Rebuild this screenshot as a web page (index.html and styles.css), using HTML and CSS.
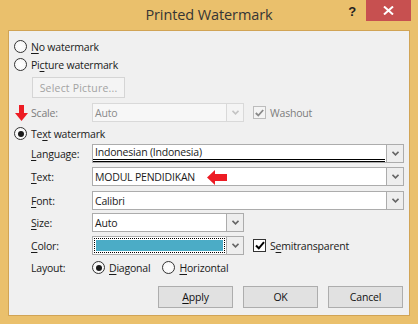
FILE: index.html
```html
<!DOCTYPE html>
<html>
<head>
<meta charset="utf-8">
<link rel="stylesheet" href="styles.css">
</head>
<body>
<div class="window">
  <div class="titlebar">
    <div></div>
    <div class="title">Printed Watermark</div>
    <div class="controls">
      <div class="help">?</div>
      <div class="close">
        <svg width="11" height="9" viewBox="0 0 11 9"><path d="M1 0.5 L10 8.5 M10 0.5 L1 8.5" stroke="#fff" stroke-width="2"/></svg>
      </div>
    </div>
  </div>
  <div class="client">
    <div class="row r17 first"><span class="radio"></span><span><u>N</u>o watermark</span></div>
    <div class="row r17 mt1"><span class="radio"></span><span>Pi<u>c</u>ture watermark</span></div>
    <div class="row mt4 ind1"><div class="btn disabled selpic">Select Picture...</div></div>
    <div class="row r19 mt5">
      <svg class="down-arrow" width="13" height="16" viewBox="0 0 13 16"><path d="M4 0 H9 V8 H13 L6.5 16 L0 8 H4 Z" fill="#ed1c24"/></svg>
      <span class="label dis">Scale:</span>
      <div class="combo small disabled">
        <div class="field">Auto</div>
        <div class="arrowbox"><svg width="7" height="5" viewBox="0 0 7 5"><polyline points="0.5,0.8 3.5,3.8 6.5,0.8" fill="none" stroke="#c4c4c4" stroke-width="1.6"/></svg></div>
      </div>
      <span class="check disabled"><svg width="9" height="8" viewBox="0 0 9 8"><polyline points="0.8,4 3.3,6.5 8.2,1" fill="none" stroke="#8a8a8a" stroke-width="1.8"/></svg></span>
      <span class="cklabel dis">Washout</span>
    </div>
    <div class="row r17 mt3"><span class="radio checked"></span><span>Te<u>x</u>t watermark</span></div>
    <div class="row r19 mt2 ind">
      <span class="label"><u>L</u>anguage:</span>
      <div class="combo wide">
        <div class="field dbl">Indonesian (Indonesia)</div>
        <div class="arrowbox"><svg width="7" height="5" viewBox="0 0 7 5"><polyline points="0.5,0.8 3.5,3.8 6.5,0.8" fill="none" stroke="#666" stroke-width="1.6"/></svg></div>
      </div>
    </div>
    <div class="row r19 mt4 ind">
      <span class="label"><u>T</u>ext:</span>
      <div class="combo wide">
        <div class="field">MODUL PENDIDIKAN
          <svg class="left-arrow" width="20" height="15" viewBox="0 0 20 15"><path d="M0 7.5 L8 0 V4 H20 V11 H8 V15 Z" fill="#ed1c24"/></svg>
        </div>
        <div class="arrowbox"><svg width="7" height="5" viewBox="0 0 7 5"><polyline points="0.5,0.8 3.5,3.8 6.5,0.8" fill="none" stroke="#666" stroke-width="1.6"/></svg></div>
      </div>
    </div>
    <div class="row r19 mt5 ind">
      <span class="label"><u>F</u>ont:</span>
      <div class="combo wide">
        <div class="field">Calibri</div>
        <div class="arrowbox"><svg width="7" height="5" viewBox="0 0 7 5"><polyline points="0.5,0.8 3.5,3.8 6.5,0.8" fill="none" stroke="#666" stroke-width="1.6"/></svg></div>
      </div>
    </div>
    <div class="row r19 mt3 ind">
      <span class="label"><u>S</u>ize:</span>
      <div class="combo small">
        <div class="field">Auto</div>
        <div class="arrowbox"><svg width="7" height="5" viewBox="0 0 7 5"><polyline points="0.5,0.8 3.5,3.8 6.5,0.8" fill="none" stroke="#666" stroke-width="1.6"/></svg></div>
      </div>
    </div>
    <div class="row r19 mt4 ind">
      <span class="label"><u>C</u>olor:</span>
      <div class="combo small">
        <div class="field colorfield"><div class="focus"><div class="swatch"></div></div></div>
        <div class="arrowbox"><svg width="7" height="5" viewBox="0 0 7 5"><polyline points="0.5,0.8 3.5,3.8 6.5,0.8" fill="none" stroke="#666" stroke-width="1.6"/></svg></div>
      </div>
      <span class="check"><svg width="10" height="9" viewBox="0 0 10 9"><polyline points="1,4.5 3.8,7.3 9,1.2" fill="none" stroke="#000" stroke-width="2"/></svg></span>
      <span class="cklabel">S<u>e</u>mitransparent</span>
    </div>
    <div class="row r17 mt4 ind">
      <span class="label">Layout:</span>
      <span class="radio checked"></span><span><u>D</u>iagonal</span>
      <span class="radio opt2"></span><span><u>H</u>orizontal</span>
    </div>
    <div class="row buttons">
      <div class="btn action"><span><u>A</u>pply</span></div>
      <div class="btn action">OK</div>
      <div class="btn action">Cancel</div>
    </div>
  </div>
</div>
</body>
</html>
```

FILE: styles.css
```css
* { box-sizing: border-box; }
body {
  margin: 0;
  font-family: "Open Sans", "Noto Sans", sans-serif;
  font-size: 10.5px;
  letter-spacing: -0.2px;
  color: #1a1a1a;
}
.window {
  width: 418px;
  height: 324px;
  background: #eac06c;
  display: flex;
  flex-direction: column;
}
.titlebar {
  height: 30px;
  display: grid;
  grid-template-columns: 1fr auto 1fr;
}
.title {
  font-size: 14.5px;
  line-height: 30px;
  color: #353535;
  letter-spacing: -0.1px;
}
.controls {
  display: flex;
  justify-content: flex-end;
  align-items: flex-start;
}
.help {
  font-family: "Liberation Sans", sans-serif;
  font-weight: bold;
  font-size: 13px;
  line-height: 13px;
  margin-top: 5px;
  margin-right: 10px;
  color: #222;
}
.close {
  width: 45px;
  height: 21px;
  margin-right: 7px;
  background: #c75050;
  display: flex;
  align-items: center;
  justify-content: center;
}
.client {
  flex: 1;
  margin: 0 8px 8px;
  background: #f0f0f0;
  border: 1px solid #d1a455;
  padding: 7px 6px 0 5px;
  display: flex;
  flex-direction: column;
}
.row {
  display: flex;
  align-items: center;
  white-space: nowrap;
}
.r17 { height: 17px; }
.r19 { height: 19px; }
.mt1 { margin-top: 1px; }
.mt2 { margin-top: 2px; }
.mt3 { margin-top: 3px; }
.mt4 { margin-top: 4px; }
.mt5 { margin-top: 5px; }
.ind { padding-left: 17px; }
.ind1 { padding-left: 18px; }
u { text-decoration-thickness: 1px; text-underline-offset: 2px; }

.radio {
  width: 13px;
  height: 13px;
  border-radius: 50%;
  border: 1px solid #333;
  background: radial-gradient(circle, #fff 0%, #f4f4f4 100%);
  margin-right: 4px;
  flex: none;
  display: flex;
  align-items: center;
  justify-content: center;
}
.radio.checked::after {
  content: "";
  width: 6px;
  height: 6px;
  border-radius: 50%;
  background: #1a1a1a;
}
.radio.opt2 { margin-left: 12px; }

.btn {
  display: flex;
  align-items: center;
  justify-content: center;
  border: 1px solid #adadad;
  background: #e1e1e1;
}
.btn.disabled {
  background: #f4f4f4;
  border-color: #d5d5d5;
  color: #a3a3a3;
}
.selpic {
  width: 93px;
  height: 21px;
  letter-spacing: 0.2px;
}

.down-arrow { margin-left: 1px; margin-right: 3px; flex: none; }
.label { width: 61px; flex: none; }
.dis { color: #7c7c7c; }

.combo {
  height: 19px;
  border: 1px solid #acacac;
  background: #fff;
  display: flex;
  flex: none;
}
.combo.wide { width: 312px; }
.combo.small { width: 152px; }
.combo.disabled {
  border-color: #d9d9d9;
  background: #f7f7f7;
  color: #8a8a8a;
}
.field {
  flex: 1;
  padding-left: 2px;
  display: flex;
  align-items: center;
  line-height: 14px;
}
.field.dbl {
  padding-left: 2px;
  margin: 0 1px 0 0;
  border-bottom: 3px double #000;
  line-height: 13px;
}
.left-arrow { margin-left: 12px; margin-top: 1px; }
.arrowbox {
  width: 17px;
  flex: none;
  border-left: 1px solid #acacac;
  background: #eeeeee;
  display: flex;
  align-items: center;
  justify-content: center;
}
.combo.disabled .arrowbox {
  border-left-color: #d9d9d9;
  background: #f4f4f4;
}
.colorfield { padding: 1px; }
.focus {
  width: 100%;
  height: 100%;
  border: 1px dotted #000;
  padding: 1px;
}
.swatch {
  width: 100%;
  height: 100%;
  background: #4bacc6;
}

.check {
  width: 13px;
  height: 13px;
  border: 1px solid #333;
  background: #fff;
  margin-left: 9px;
  margin-right: 4px;
  display: flex;
  align-items: center;
  justify-content: center;
  flex: none;
}
.check.disabled {
  border-color: #bcbcbc;
  background: #f4f4f4;
}

.buttons {
  margin-top: 10px;
  justify-content: flex-end;
  gap: 10px;
}
.btn.action {
  width: 75px;
  height: 22px;
  color: #111;
}
```
